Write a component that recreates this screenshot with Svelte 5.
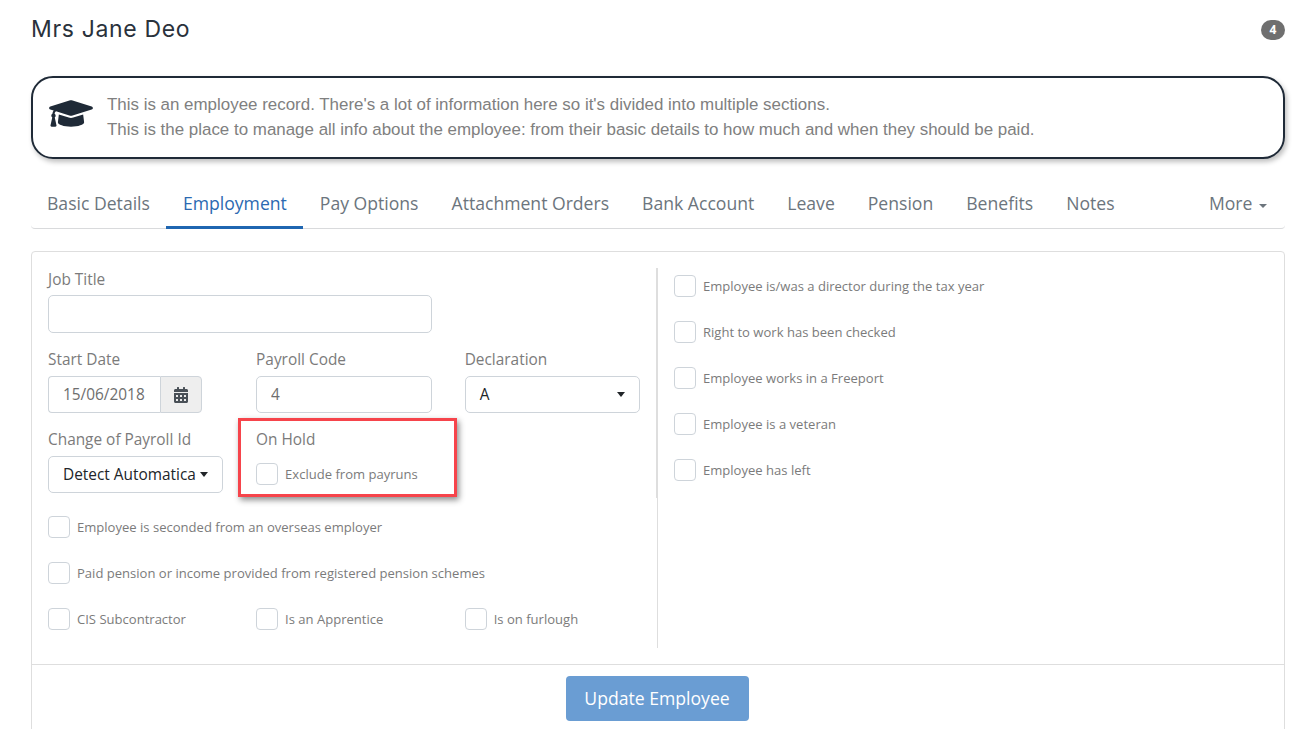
<script>
  const tabs = ['Basic Details', 'Employment', 'Pay Options', 'Attachment Orders', 'Bank Account', 'Leave', 'Pension', 'Benefits', 'Notes'];
  const rightChecks = [
    'Employee is/was a director during the tax year',
    'Right to work has been checked',
    'Employee works in a Freeport',
    'Employee is a veteran',
    'Employee has left'
  ];
  const bottomChecks = ['CIS Subcontractor', 'Is an Apprentice', 'Is on furlough'];
</script>

<div class="page">
  <header class="title-row">
    <h1>Mrs Jane Deo</h1>
    <span class="badge">4</span>
  </header>

  <div class="tip">
    <svg class="cap" viewBox="0 0 640 512" aria-hidden="true">
      <path fill="#1f2a37" d="M622.34 153.2L343.4 67.5c-15.2-4.67-31.6-4.67-46.79 0L17.66 153.2c-23.54 7.23-23.54 38.36 0 45.59l48.63 14.94c-10.67 13.19-17.23 29.28-17.88 46.9C38.78 266.15 32 276.11 32 288c0 10.78 5.68 19.85 13.86 25.65L20.33 428.53C18.11 438.52 25.71 448 35.94 448h56.11c10.24 0 17.84-9.48 15.62-19.47L82.14 313.65C90.32 307.85 96 298.78 96 288c0-11.57-6.47-21.25-15.66-26.87.76-15.02 8.44-28.3 20.69-36.72L296.6 284.5c9.06 2.78 26.44 6.25 46.79 0l278.95-85.7c23.55-7.24 23.55-38.36 0-45.6zM352.79 315.09c-28.53 8.76-52.84 3.92-65.59 0l-145.02-44.55L128 384c0 35.35 85.96 64 192 64s192-28.65 192-64l-14.18-113.47-145.03 44.56z"/>
    </svg>
    <p>
      This is an employee record. There's a lot of information here so it's divided into multiple sections.<br />
      This is the place to manage all info about the employee: from their basic details to how much and when they should be paid.
    </p>
  </div>

  <nav class="tabs">
    {#each tabs as tab}
      <span class="tab" class:active={tab === 'Employment'}>{tab}</span>
    {/each}
    <span class="tab more">More <i class="caret small"></i></span>
  </nav>

  <section class="card">
    <div class="columns">
      <div class="left">
        <div class="row">
          <div class="field job">
            <label for="job">Job Title</label>
            <input id="job" type="text" />
          </div>
        </div>

        <div class="row thirds">
          <div class="field">
            <label for="start">Start Date</label>
            <div class="date">
              <input id="start" type="text" value="15/06/2018" />
              <span class="addon">
                <svg viewBox="0 0 448 512" width="14" height="16" aria-hidden="true">
                  <path fill="#495057" d="M0 464c0 26.5 21.5 48 48 48h352c26.5 0 48-21.5 48-48V192H0v272zm320-196c0-6.6 5.4-12 12-12h40c6.6 0 12 5.4 12 12v40c0 6.6-5.4 12-12 12h-40c-6.6 0-12-5.4-12-12v-40zm0 128c0-6.6 5.4-12 12-12h40c6.6 0 12 5.4 12 12v40c0 6.6-5.4 12-12 12h-40c-6.6 0-12-5.4-12-12v-40zM192 268c0-6.6 5.4-12 12-12h40c6.6 0 12 5.4 12 12v40c0 6.6-5.4 12-12 12h-40c-6.6 0-12-5.4-12-12v-40zm0 128c0-6.6 5.4-12 12-12h40c6.6 0 12 5.4 12 12v40c0 6.6-5.4 12-12 12h-40c-6.6 0-12-5.4-12-12v-40zM64 268c0-6.6 5.4-12 12-12h40c6.6 0 12 5.4 12 12v40c0 6.6-5.4 12-12 12H76c-6.6 0-12-5.4-12-12v-40zm0 128c0-6.6 5.4-12 12-12h40c6.6 0 12 5.4 12 12v40c0 6.6-5.4 12-12 12H76c-6.6 0-12-5.4-12-12v-40zM400 64h-48V16c0-8.8-7.2-16-16-16h-32c-8.8 0-16 7.2-16 16v48H160V16c0-8.8-7.2-16-16-16h-32c-8.8 0-16 7.2-16 16v48H48C21.5 64 0 85.5 0 112v48h448v-48c0-26.5-21.5-48-48-48z"/>
                </svg>
              </span>
            </div>
          </div>
          <div class="field">
            <label for="code">Payroll Code</label>
            <input id="code" type="text" value="4" />
          </div>
          <div class="field">
            <span class="label">Declaration</span>
            <div class="select">A <i class="caret"></i></div>
          </div>
        </div>

        <div class="row thirds">
          <div class="field">
            <span class="label">Change of Payroll Id</span>
            <div class="select detect"><span>Detect Automatica</span><i class="caret"></i></div>
          </div>
          <div class="field hold">
            <span class="label">On Hold</span>
            <label class="check"><input type="checkbox" /><span>Exclude from payruns</span></label>
            <div class="callout"></div>
          </div>
        </div>

        <div class="checks">
          <label class="check"><input type="checkbox" /><span>Employee is seconded from an overseas employer</span></label>
          <label class="check"><input type="checkbox" /><span>Paid pension or income provided from registered pension schemes</span></label>
          <div class="row thirds">
            {#each bottomChecks as text}
              <label class="check"><input type="checkbox" /><span>{text}</span></label>
            {/each}
          </div>
        </div>
      </div>

      <div class="right">
        {#each rightChecks as text}
          <label class="check"><input type="checkbox" /><span>{text}</span></label>
        {/each}
      </div>
    </div>

    <footer class="actions">
      <button type="button">Update Employee</button>
    </footer>
  </section>
</div>

<style>
  :global(body) {
    background: #fff;
  }

  .page {
    box-sizing: border-box;
    height: 729px;
    overflow: hidden;
    padding: 0 30px 0 31px;
    font-family: "Open Sans", sans-serif;
    font-size: 15.4px;
    color: #7b7b7b;
  }

  .title-row {
    display: flex;
    align-items: center;
    justify-content: space-between;
    height: 59px;
  }

  h1 {
    margin: 0 0 2px;
    font-family: Inter, sans-serif;
    font-size: 23px;
    font-weight: 400;
    letter-spacing: 0.65px;
    color: #2a323c;
  }

  .badge {
    box-sizing: border-box;
    width: 24px;
    height: 20px;
    border-radius: 10px;
    background: #6f6f6f;
    color: #fff;
    font-size: 12px;
    font-weight: 700;
    line-height: 20px;
    text-align: center;
  }

  .tip {
    box-sizing: border-box;
    display: flex;
    align-items: center;
    gap: 14px;
    height: 83px;
    margin-top: 17px;
    padding: 0 16px;
    border: 2px solid #1f2a37;
    border-radius: 22px;
    box-shadow: 2px 3px 5px rgba(0, 0, 0, 0.25);
  }

  .cap {
    flex: none;
    width: 44px;
    height: 35px;
    margin-top: -8px;
  }

  .tip p {
    margin: -2px 0 0;
    font-family: "Liberation Sans", sans-serif;
    font-size: 16.93px;
    line-height: 25px;
    color: #808080;
  }

  .tabs {
    box-sizing: border-box;
    display: flex;
    height: 53px;
    margin-top: 17px;
    border-bottom: 1px solid #d9dadc;
    border-radius: 0 0 4px 4px;
    font-size: 17.6px;
  }

  .tab {
    box-sizing: border-box;
    height: 53px;
    padding: 15px 16.5px 0;
    color: #6c757d;
    white-space: nowrap;
  }

  .tab:first-child {
    margin-left: -0.5px;
  }

  .tab.active {
    color: #2b69b1;
    border-bottom: 3px solid #1f66b1;
  }

  .tab.more {
    margin-left: auto;
    padding-right: 18px;
  }

  .caret {
    display: inline-block;
    width: 0;
    height: 0;
    border-top: 5px solid #212529;
    border-left: 4.5px solid transparent;
    border-right: 4.5px solid transparent;
  }

  .caret.small {
    margin-left: 2px;
    vertical-align: 2px;
    border-top: 4px solid #6c757d;
  }

  .card {
    margin-top: 22px;
    border: 1px solid #dedede;
    border-radius: 4px;
    min-height: 600px;
  }

  .columns {
    display: flex;
    padding: 16px;
    height: 380px;
  }

  .left {
    box-sizing: border-box;
    width: 610px;
    flex: none;
    padding-right: 17px;
    border-right: 1px solid #dedede;
    position: relative;
    display: flex;
    flex-direction: column;
    gap: 17px;
  }

  .left::after {
    content: "";
    position: absolute;
    right: -1px;
    top: 0;
    width: 2px;
    height: 230px;
    background: #dedede;
  }

  .row {
    display: flex;
  }

  .thirds {
    display: grid;
    grid-template-columns: 175px 175.5px 175.5px;
    column-gap: 33.1px;
  }

  .field {
    display: flex;
    flex-direction: column;
    min-width: 0;
  }

  .job {
    width: 384px;
    padding-top: 2px;
  }

  label,
  .label {
    line-height: 20px;
    margin-bottom: 6px;
    color: #7b7b7b;
  }

  .job label {
    margin-bottom: 5px;
  }

  .field > input,
  .date input {
    box-sizing: border-box;
    width: 100%;
    height: 37px;
    padding: 0 14px;
    border: 1px solid #ced4da;
    border-radius: 5px;
    outline: none;
    background: #fff;
    font: inherit;
    color: #6e6e6e;
  }

  .job input {
    height: 38px;
  }

  .date {
    display: flex;
    width: 154px;
  }

  .date input {
    flex: 1;
    min-width: 0;
    border-radius: 4px 0 0 4px;
    border-right: 0;
  }

  .addon {
    box-sizing: border-box;
    display: flex;
    align-items: center;
    justify-content: center;
    width: 42px;
    flex: none;
    height: 37px;
    border: 1px solid #ced4da;
    border-radius: 0 4px 4px 0;
    background: #eee;
  }

  .select {
    box-sizing: border-box;
    display: flex;
    align-items: center;
    justify-content: space-between;
    height: 37px;
    padding: 0 14px;
    border: 1px solid #ced4da;
    border-radius: 5px;
    color: #212529;
  }

  .detect {
    white-space: nowrap;
  }

  .hold {
    position: relative;
  }

  .hold .check {
    margin-top: 7px;
  }

  .callout {
    position: absolute;
    left: -18px;
    top: -12px;
    width: 219px;
    height: 79px;
    box-sizing: border-box;
    border: 3px solid #f6444b;
    box-shadow: 2px 3px 6px rgba(0, 0, 0, 0.45);
    pointer-events: none;
  }

  .check {
    display: flex;
    align-items: center;
    gap: 7px;
    margin: 0;
    height: 22px;
    font-size: 13.06px;
    color: #7b7b7b;
    white-space: nowrap;
  }

  .check input {
    appearance: none;
    box-sizing: border-box;
    flex: none;
    width: 22px;
    height: 22px;
    margin: 0;
    border: 1px solid #ced4da;
    border-radius: 4px;
    background: #fff;
  }

  .checks {
    display: flex;
    flex-direction: column;
    gap: 24px;
    margin-top: 6px;
  }

  .right {
    display: flex;
    flex-direction: column;
    gap: 24px;
    padding: 7px 0 0 16px;
  }

  .actions {
    display: flex;
    justify-content: center;
    padding: 11px 2px 0 0;
    border-top: 1px solid #dedede;
  }

  button {
    width: 183px;
    height: 45px;
    padding: 0 0 2px;
    border: none;
    border-radius: 4px;
    background: #6a9dd3;
    color: #fff;
    font-family: "Open Sans", sans-serif;
    font-size: 17.6px;
  }
</style>
